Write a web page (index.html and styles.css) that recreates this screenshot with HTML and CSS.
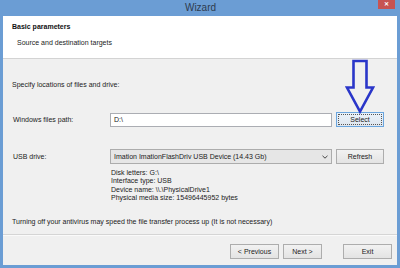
FILE: index.html
```html
<!DOCTYPE html>
<html>
<head>
<meta charset="utf-8">
<link rel="stylesheet" href="styles.css">
</head>
<body>
<div class="window">
  <div class="titlebar">
    <div class="title">Wizard</div>
    <div class="close">&#x2715;</div>
  </div>
  <div class="client">
    <div class="header">
      <div class="h-title">Basic parameters</div>
      <div class="h-sub">Source and destination targets</div>
    </div>
    <div class="content">
      <div class="intro">Specify locations of files and drive:</div>
      <div class="row row1">
        <div class="label">Windows files path:</div>
        <div class="input">D:\</div>
        <div class="btn focus"><span>Select</span></div>
      </div>
      <div class="row row2">
        <div class="label">USB drive:</div>
        <div class="combo"><span>Imation ImationFlashDriv USB Device (14.43 Gb)</span>
          <svg class="chev" width="6" height="4" viewBox="0 0 6 4"><path d="M0.5 0.8 L3 3.2 L5.5 0.8" fill="none" stroke="#444" stroke-width="1"/></svg>
        </div>
        <div class="btn"><span>Refresh</span></div>
      </div>
      <div class="details">
        <div>Disk letters: G:\</div>
        <div>Interface type: USB</div>
        <div>Device name: \\.\PhysicalDrive1</div>
        <div>Physical media size: 15496445952 bytes</div>
      </div>
      <div class="note">Turning off your antivirus may speed the file transfer process up (It is not necessary)</div>
    </div>
    <div class="footer">
      <div class="btn prev"><span>&lt; Previous</span></div>
      <div class="btn next"><span>Next &gt;</span></div>
      <div class="btn exit"><span>Exit</span></div>
    </div>
  </div>
  <svg class="arrow" width="400" height="268" viewBox="0 0 400 268">
    <path d="M353.5 61 L353.5 87.5 L347 87.5 L360 111.5 L373 87.5 L366.5 87.5 L366.5 61 Z" fill="none" stroke="#2a36c9" stroke-width="2.6" stroke-linejoin="miter"/>
  </svg>
</div>
</body>
</html>
```

FILE: styles.css
```css
html, body {
  margin: 0;
  padding: 0;
}
body {
  width: 400px;
  height: 268px;
  overflow: hidden;
  font-family: "Liberation Sans", Arial, sans-serif;
  color: #1b1b1b;
}
.window {
  position: relative;
  width: 400px;
  height: 268px;
  box-sizing: border-box;
  background: #6b9dd4;
  padding: 0 3px 3px 3px;
  display: flex;
  flex-direction: column;
}
.titlebar {
  height: 16px;
  display: flex;
  align-items: flex-start;
}
.title {
  flex: 1;
  text-align: center;
  font-size: 10px;
  line-height: 16px;
  color: #2e3b4e;
  padding-left: 20px;
}
.close {
  width: 17px;
  height: 9px;
  margin-right: 2px;
  background: #c75352;
  color: #fff;
  font-size: 6px;
  line-height: 9px;
  text-align: center;
  font-weight: bold;
}
.client {
  flex: 1;
  background: #f0f0f0;
  display: flex;
  flex-direction: column;
}
.header {
  height: 42px;
  background: #fff;
  border-bottom: 1px solid #d3d3d3;
  box-sizing: content-box;
  padding-left: 9px;
}
.h-title {
  font-weight: bold;
  font-size: 7px;
  line-height: 8px;
  margin-top: 7px;
  color: #111;
}
.h-sub {
  font-size: 7px;
  line-height: 8px;
  margin-top: 8px;
  padding-left: 5px;
}
.content {
  flex: 1;
  padding-left: 9px;
  font-size: 7px;
}
.intro {
  line-height: 8px;
  margin-top: 22px;
}
.row {
  display: grid;
  grid-template-columns: 93px 222px 48px;
  column-gap: 4px;
  align-items: center;
  padding-left: 1px;
}
.row1 {
  margin-top: 23px;
}
.row2 {
  margin-top: 22px;
}
.label {
  line-height: 8px;
}
.input {
  height: 14px;
  box-sizing: border-box;
  border: 1px solid #abadb3;
  background: #fff;
  line-height: 12px;
  padding-left: 3px;
}
.combo {
  height: 15px;
  box-sizing: border-box;
  border: 1px solid #acacac;
  background: #e6e6e6;
  line-height: 13px;
  padding-left: 3px;
  display: flex;
  justify-content: space-between;
  align-items: center;
  padding-right: 3px;
}
.chev {
  display: block;
}
.btn {
  height: 15px;
  box-sizing: border-box;
  border: 1px solid #adadad;
  background: linear-gradient(#f2f2f2, #e3e3e3);
  display: flex;
  align-items: center;
  justify-content: center;
  line-height: 8px;
  font-size: 7px;
}
.btn.focus {
  border-color: #6aa5de;
  background: linear-gradient(#eaf2fa, #dfe6ee);
  padding: 1px;
}
.btn.focus span {
  flex: 1;
  align-self: stretch;
  display: flex;
  align-items: center;
  justify-content: center;
  outline: 1px dotted #555;
  outline-offset: -1px;
}
.details {
  margin-top: 5px;
  margin-left: 99px;
  line-height: 8.3px;
}
.note {
  margin-top: 16px;
  line-height: 8px;
}
.footer {
  height: 31px;
  border-top: 1px solid #d5d5d5;
  box-shadow: inset 0 1px 0 #fafafa;
  display: flex;
  justify-content: flex-end;
  align-items: flex-start;
  padding-top: 9px;
  padding-right: 5px;
  box-sizing: border-box;
}
.prev {
  width: 49px;
}
.next {
  width: 39px;
  margin-left: 4px;
}
.exit {
  width: 49px;
  margin-left: 21px;
}
.arrow {
  position: absolute;
  left: 0;
  top: 0;
  pointer-events: none;
}
```
